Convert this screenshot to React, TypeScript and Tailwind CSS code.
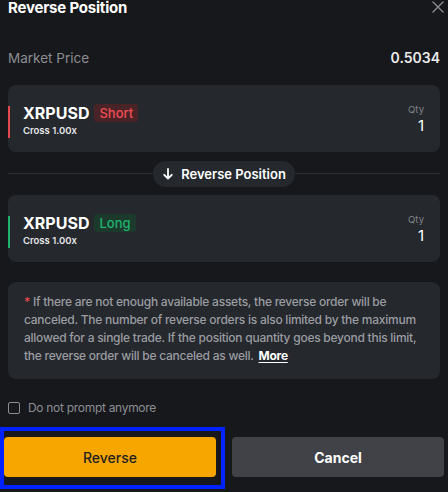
import React from "react";

function PositionCard({ side }: { side: "Short" | "Long" }) {
  const isShort = side === "Short";
  return (
    <div className="flex h-[67px] items-start rounded-lg bg-[#25282d] pt-[19px]">
      <div className={`mt-[2px] h-8 w-[2px] ${isShort ? "bg-[#e5484d]" : "bg-[#20b26c]"}`} />
      <div className="flex-1 pl-[13px]">
        <div className="flex h-[18px] items-center gap-[5px]">
          <span className="text-[16px] font-bold leading-[18px] text-white">XRPUSD</span>
          <span
            className={`flex h-[18px] items-center rounded-[3px] px-[5px] text-[13px] font-medium leading-[18px] ${
              isShort ? "bg-[#4a2327] text-[#ee4d55]" : "bg-[#1b3a2c] text-[#20b26c]"
            }`}
          >
            {side}
          </span>
        </div>
        <div className="mt-[3px] text-[9.5px] font-semibold leading-3 text-[#e6e7e9]">Cross 1.00x</div>
      </div>
      <div className="flex flex-col items-end pr-4">
        <div className="text-[9.5px] leading-3 text-[#80838a]">Qty</div>
        <div className="text-[15px] leading-5 text-white">1</div>
      </div>
    </div>
  );
}

export default function App() {
  return (
    <div
      className="relative h-[492px] w-[448px] overflow-hidden bg-[#17181c] px-2"
      style={{ fontFamily: "Inter, 'Noto Sans', sans-serif" }}
    >
      {/* header */}
      <div className="flex h-[15px] items-start justify-between">
        <span className="pt-[1px] text-[15px] font-bold leading-[14px] tracking-[-0.2px] text-white">Reverse Position</span>
        <svg width="12" height="12" viewBox="0 0 12 12" className="mr-[-4px] mt-[1px]">
          <path d="M1 1 L11 11 M11 1 L1 11" stroke="#8b8d92" strokeWidth="1.4" strokeLinecap="round" />
        </svg>
      </div>

      {/* market price */}
      <div className="mt-[33px] flex h-5 items-center justify-between">
        <span className="text-[13.5px] leading-5 text-[#8b8d92]">Market Price</span>
        <span className="text-[14px] font-semibold leading-5 text-[#eaeaec]">0.5034</span>
      </div>

      <div className="mt-[17px]">
        <PositionCard side="Short" />
      </div>

      {/* divider with pill */}
      <div className="flex h-[43px] items-center">
        <div className="h-px flex-1 bg-[#2a2d32]" />
        <div className="flex h-[26px] items-center gap-[8px] rounded-full bg-[#25282d] pl-[10px] pr-[9px]">
          <svg width="10" height="12" viewBox="0 0 10 12">
            <path d="M5 1 V10.5 M1.2 6.8 L5 10.5 L8.8 6.8" stroke="#ffffff" strokeWidth="1.8" fill="none" strokeLinecap="round" strokeLinejoin="round" />
          </svg>
          <span className="text-[13px] font-semibold leading-4 text-white">Reverse Position</span>
        </div>
        <div className="h-px flex-1 bg-[#2a2d32]" />
      </div>

      <PositionCard side="Long" />

      {/* note */}
      <div className="mt-[20px] h-[97px] rounded-lg bg-[#25282d] px-4 py-[11px] text-[12px] font-medium leading-[18px] tracking-[-0.25px] text-[#9a9ca1]">
        <div className="whitespace-nowrap">
          <span className="text-[#e5484d]">*</span> If there are not enough available assets, the reverse order will be
        </div>
        <div className="whitespace-nowrap">canceled. The number of reverse orders is also limited by the maximum</div>
        <div className="whitespace-nowrap">allowed for a single trade. If the position quantity goes beyond this limit,</div>
        <div className="whitespace-nowrap">
          the reverse order will be canceled as well.{" "}
          <span className="ml-[2px] font-bold text-white underline underline-offset-2">More</span>
        </div>
      </div>

      {/* checkbox */}
      <div className="mt-[20px] flex h-[18px] items-center gap-2">
        <div className="h-3 w-3 rounded-[2px] border border-[#8b8d92]" />
        <span className="text-[12px] leading-[18px] tracking-[-0.3px] text-[#8b8d92]">Do not prompt anymore</span>
      </div>

      {/* buttons */}
      <div className="mx-[-4px] mt-[20px] flex gap-4">
        <button className="flex h-10 flex-1 items-center justify-center rounded bg-[#f7a600] text-[14px] font-medium text-[#1e1f22]">
          Reverse
        </button>
        <button className="flex h-10 flex-1 items-center justify-center rounded bg-[#404247] text-[14px] font-bold text-white">
          Cancel
        </button>
      </div>

      {/* highlight box */}
      <div className="pointer-events-none absolute left-0 top-[427px] h-[62px] w-[225px] border-4 border-[#0022ff]" />
    </div>
  );
}
